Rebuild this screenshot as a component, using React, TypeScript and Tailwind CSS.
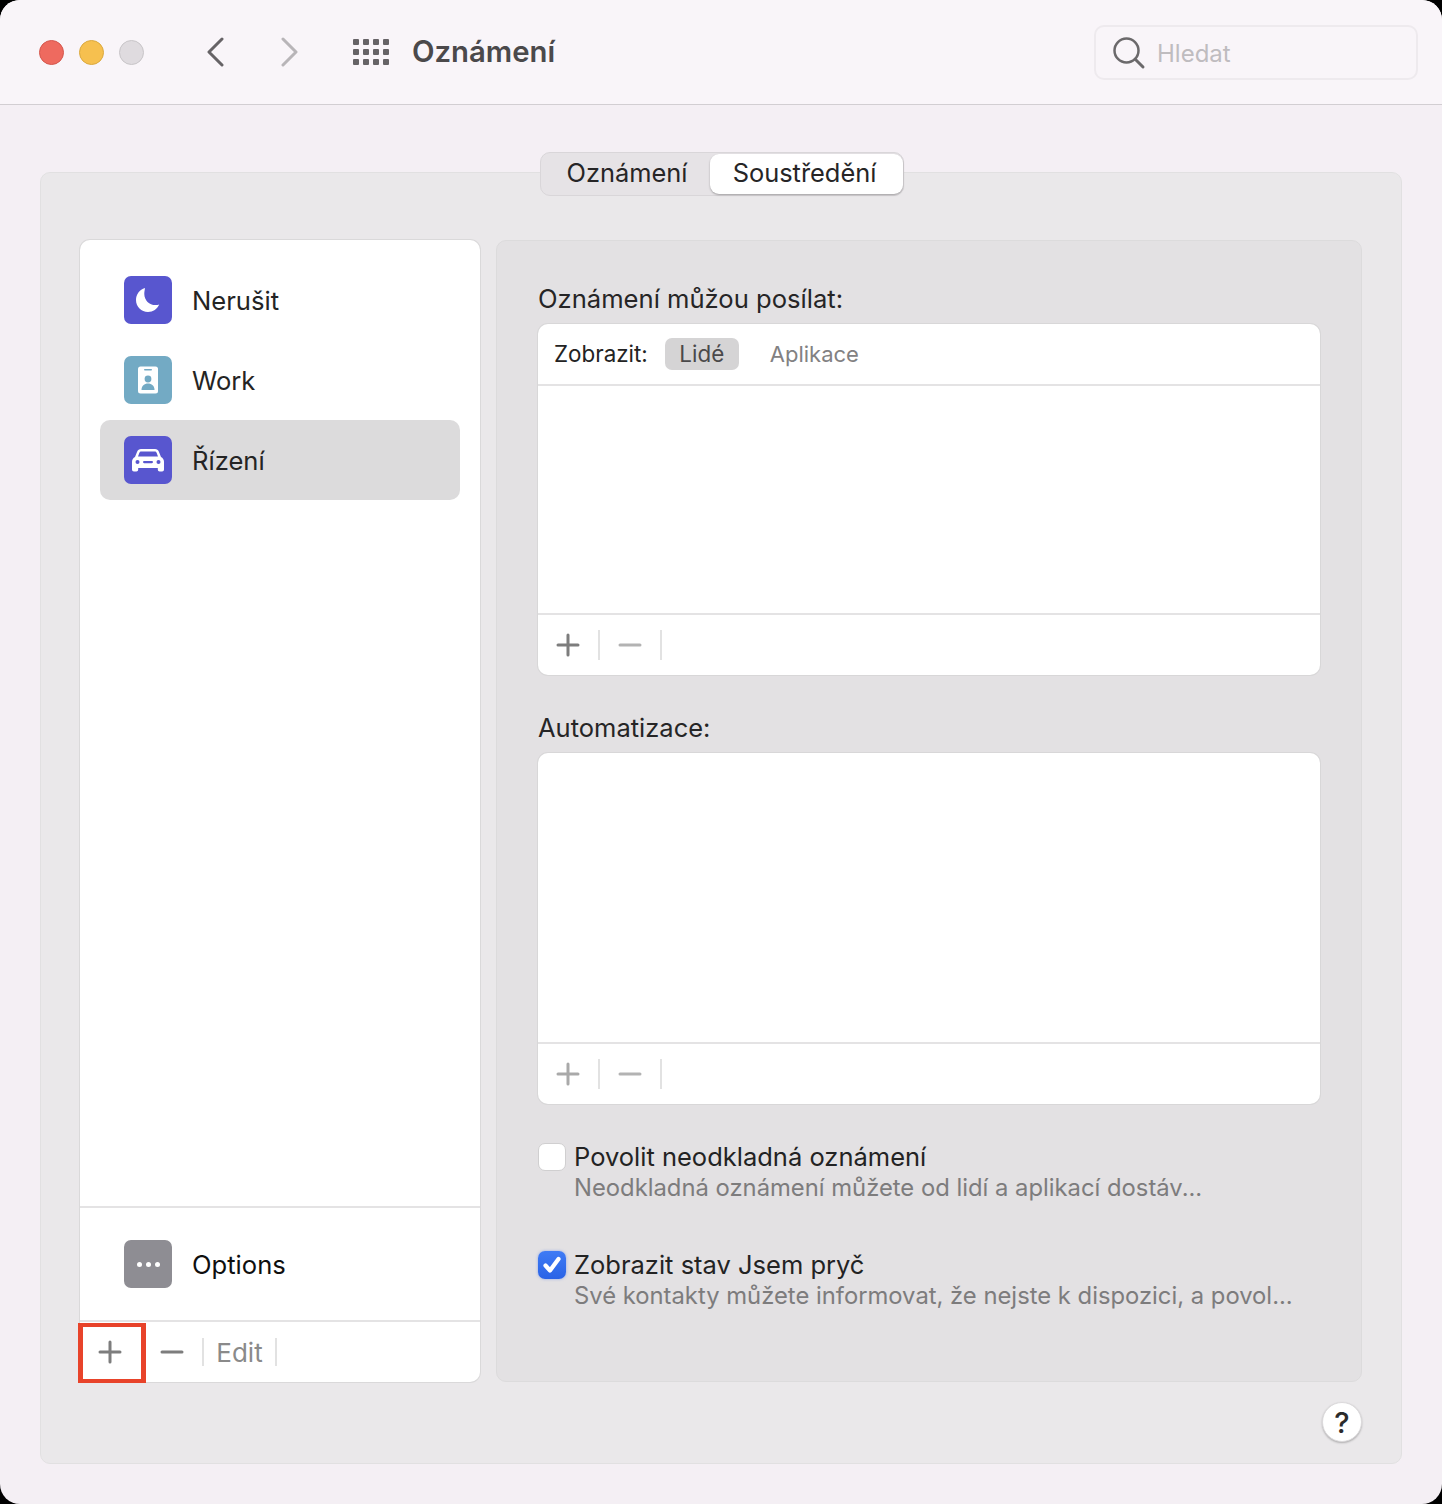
function Toolbar({ dim }: { dim?: boolean }) {
  return (
    <div className="h-[62px] flex items-center border-t-2 border-[#e4e3e4]">
      <div className="w-[62px] h-[30px] flex items-center justify-center border-r-2 border-[#e2e2e2]">
        <svg width="24" height="24" viewBox="0 0 24 24" className={dim ? 'text-[#a9a9a9]' : 'text-[#7d7d7d]'}>
          <path d="M12 2v20M2 12h20" stroke="currentColor" strokeWidth="3" strokeLinecap="round" />
        </svg>
      </div>
      <div className="w-[62px] h-[30px] flex items-center justify-center border-r-2 border-[#e2e2e2]">
        <svg width="24" height="24" viewBox="0 0 24 24" className="text-[#b3b3b3]">
          <path d="M2 12h20" stroke="currentColor" strokeWidth="3" strokeLinecap="round" />
        </svg>
      </div>
    </div>
  )
}

function IconTile({ color, children }: { color: string; children: React.ReactNode }) {
  return (
    <div className={`w-12 h-12 rounded-[7px] flex items-center justify-center shrink-0 ${color}`}>
      {children}
    </div>
  )
}

function SideRow({ label, selected, icon }: { label: string; selected?: boolean; icon: React.ReactNode }) {
  return (
    <div className={`h-20 flex items-center gap-5 pl-6 rounded-[10px] ${selected ? 'bg-[#dcdbdc]' : ''}`}>
      {icon}
      <span className="mt-[2px] text-[25.6px] text-[#242424]">{label}</span>
    </div>
  )
}

function CheckRow({ checked, title, sub }: { checked?: boolean; title: string; sub: string }) {
  return (
    <div className="flex gap-2">
      {checked ? (
        <div className="w-7 h-7 mt-[2px] rounded-[7px] bg-gradient-to-b from-[#3f7bf5] to-[#2a63e6] flex items-center justify-center shadow-[0_0_3px_rgba(60,110,240,0.5)]">
          <svg width="20" height="20" viewBox="0 0 20 20" fill="none">
            <path d="M3.500 10.500 8 15.500 16.500 4" stroke="white" strokeWidth="4.200" strokeLinecap="round" strokeLinejoin="round" />
          </svg>
        </div>
      ) : (
        <div className="w-7 h-7 mt-[2px] rounded-[7px] bg-white border border-[#d0cfd0]" />
      )}
      <div className="flex flex-col">
        <span className="text-[25.5px] leading-[31px] text-[#232323]">{title}</span>
        <span className="text-[23.8px] leading-[31px] text-[#7d7c7d] whitespace-nowrap">{sub}</span>
      </div>
    </div>
  )
}

export default function App() {
  return (
    <div className="w-[1442px] h-[1504px] bg-black font-['Inter',sans-serif] overflow-hidden">
      <div className="w-full h-full rounded-[20px] bg-[#f4eff4] flex flex-col overflow-hidden">
        {/* Title bar */}
        <header className="h-[105px] shrink-0 bg-[#f9f5f9] border-b border-[#d2ced2] flex items-center pl-[39px] pr-6">
          <div className="flex items-center gap-[15px]">
            <div className="w-[25px] h-[25px] rounded-full bg-[#ee6a5f] border border-[#d4574d]" />
            <div className="w-[25px] h-[25px] rounded-full bg-[#f6c04f] border border-[#dba93e]" />
            <div className="w-[25px] h-[25px] rounded-full bg-[#dfdbdf] border border-[#c8c5c8]" />
          </div>
          <svg width="20" height="30" viewBox="0 0 20 30" className="ml-[61px] text-[#666366]">
            <path d="M17 2 4 15l13 13" fill="none" stroke="currentColor" strokeWidth="3" strokeLinecap="round" strokeLinejoin="round" />
          </svg>
          <svg width="20" height="30" viewBox="0 0 20 30" className="ml-[55px] text-[#b8b5b8]">
            <path d="M3 2l13 13L3 28" fill="none" stroke="currentColor" strokeWidth="3" strokeLinecap="round" strokeLinejoin="round" />
          </svg>
          <div className="ml-[53px] grid grid-cols-4 gap-x-[4px] gap-y-[4px]">
            {Array.from({ length: 12 }).map((_, i) => (
              <div key={i} className="w-[6px] h-[6px] rounded-[1px] bg-[#666366]" />
            ))}
          </div>
          <h1 className="ml-[23px] text-[29.3px] font-semibold text-[#4b494b]">Oznámení</h1>
          <div className="ml-auto w-[324px] h-[55px] rounded-[10px] border-2 border-[#eeeaee] flex items-center pl-[16px] gap-[11px]">
            <svg width="34" height="34" viewBox="0 0 34 34" className="mt-[2px] text-[#6b696b]">
              <circle cx="14.5" cy="14.5" r="12" fill="none" stroke="currentColor" strokeWidth="2.5" />
              <path d="M23.5 23.5 31 31" stroke="currentColor" strokeWidth="3" strokeLinecap="round" />
            </svg>
            <span className="mt-[3px] text-[24px] text-[#bfbcbf]">Hledat</span>
          </div>
        </header>

        {/* Content */}
        <div className="flex-1 px-10 pt-[67px] pb-10">
          <div className="relative h-full rounded-[10px] bg-[#eae8ea] border border-[#e1e0e1] pt-[67px] px-[39px] flex flex-col">
            {/* Tabs sit over the panel edge */}
            <div className="absolute left-[499px] -top-[21px] w-[364px] h-[44px] rounded-[10px] bg-[#e6e3e6] border border-[#d9d6d9] flex pb-[2px]">
              <div className="w-[169px] pl-[3px] flex items-center justify-center text-[25.4px] text-[#262526]">Oznámení</div>
              <div className="w-[193px] pr-[4px] pb-[2px] rounded-[9px] bg-white shadow-[0_1px_2px_rgba(0,0,0,0.3)] flex items-center justify-center text-[25.4px] text-[#262526] mt-[1px] -mb-[1px]">
                Soustředění
              </div>
            </div>

            <div className="flex gap-4 h-[1142px]">
              {/* Sidebar */}
              <aside className="relative w-[400px] rounded-[10px] bg-white shadow-[0_0_0_1px_#dad9da] flex flex-col">
                <div className="flex-1 px-5 pt-5">
                  <SideRow
                    label="Nerušit"
                    icon={
                      <IconTile color="bg-[#5856cf]">
                        <svg width="26" height="26" viewBox="0 0 26 26" fill="white">
                          <path d="M10 1C4.500 2.600 1 7.500 1 13c0 6.600 5.400 12 12 12 5 0 9.400-3.100 11.200-7.500-1.100.4-2.400.6-3.700.6-6.300 0-11.200-5-11.200-11.200 0-1.900.3-3.500.7-5.900z" />
                        </svg>
                      </IconTile>
                    }
                  />
                  <SideRow
                    label="Work"
                    icon={
                      <IconTile color="bg-[#73aac4]">
                        <svg width="22" height="28" viewBox="0 0 22 28">
                          <rect x="1" y="0.5" width="20" height="27" rx="2.5" fill="white" />
                          <rect x="7" y="3" width="8" height="1.6" rx="0.8" fill="#73aac4" />
                          <circle cx="11" cy="13" r="3.4" fill="#73aac4" />
                          <path d="M4.500 24c0-4.200 2.900-6.500 6.500-6.500s6.500 2.300 6.500 6.500z" fill="#73aac4" />
                        </svg>
                      </IconTile>
                    }
                  />
                  <SideRow
                    label="Řízení"
                    selected
                    icon={
                      <IconTile color="bg-[#5856cf]">
                        <svg width="32" height="24" viewBox="0 0 32 24">
                          <path
                            fill="white"
                            d="M9 1h14c1.800 0 3.200 1 3.900 2.700L29 9c1.800 1 3 2.600 3 4.800V21.500c0 1.100-.8 2-1.900 2h-2.400c-1.100 0-1.900-.9-1.900-2V20H6.200v1.500c0 1.100-.8 2-1.900 2H1.900C.8 23.500 0 22.600 0 21.500v-7.700C0 11.600 1.200 10 3 9l2.100-5.300C5.800 2 7.200 1 9 1z"
                          />
                          <path fill="#5856cf" d="M9.200 3.500h13.600c.8 0 1.500.5 1.800 1.200L26 8.500H6l1.400-3.800c.3-.7 1-1.200 1.800-1.200z" />
                          <circle cx="5.500" cy="14" r="2" fill="#5856cf" />
                          <circle cx="26.500" cy="14" r="2" fill="#5856cf" />
                          <rect x="11" y="13" width="10" height="2.200" rx="1.100" fill="#5856cf" />
                        </svg>
                      </IconTile>
                    }
                  />
                </div>
                <div className="h-[114px] border-t-2 border-[#e4e3e4] flex items-center gap-5 pl-[44px]">
                  <IconTile color="bg-[#8e8d93]">
                    <div className="flex gap-[4px]">
                      <div className="w-[5px] h-[5px] rounded-full bg-white" />
                      <div className="w-[5px] h-[5px] rounded-full bg-white" />
                      <div className="w-[5px] h-[5px] rounded-full bg-white" />
                    </div>
                  </IconTile>
                  <span className="mt-[2px] text-[25.6px] text-[#0f0f0f]">Options</span>
                </div>
                <div className="h-[62px] border-t-2 border-[#e4e3e4] flex items-center">
                  <div className="w-[60px] flex justify-center">
                    <svg width="24" height="24" viewBox="0 0 24 24" className="text-[#7d7d7d]">
                      <path d="M12 2v20M2 12h20" stroke="currentColor" strokeWidth="3" strokeLinecap="round" />
                    </svg>
                  </div>
                  <div className="w-[64px] h-[28px] pl-[1px] flex items-center justify-center border-r-2 border-[#e2e2e2]">
                    <svg width="24" height="24" viewBox="0 0 24 24" className="text-[#7d7d7d]">
                      <path d="M2 12h20" stroke="currentColor" strokeWidth="3" strokeLinecap="round" />
                    </svg>
                  </div>
                  <div className="w-[73px] h-[28px] pt-[1px] flex items-center justify-center border-r-2 border-[#e2e2e2] text-[26px] text-[#8a8a8a]">
                    Edit
                  </div>
                </div>
                {/* Annotation around the add button */}
                <div className="absolute -left-[2px] -bottom-[1px] w-[68px] h-[60px] border-x-[5px] border-y-4 border-[#e8432a]" />
              </aside>

              {/* Detail panel */}
              <section className="flex-1 rounded-[10px] bg-[#e3e1e3] border border-[#dcdbdc] px-[41px] pt-[42px] flex flex-col">
                <p className="text-[25.6px] leading-[32px] text-[#262526] mb-[9px]">Oznámení můžou posílat:</p>
                <div className="h-[351px] rounded-[10px] bg-white shadow-[0_0_0_1px_#d8d7d8] flex flex-col">
                  <div className="h-[62px] flex items-center pl-[16px] border-b-2 border-[#e4e3e4] text-[22.4px]">
                    <span className="text-[#232323]">Zobrazit:</span>
                    <span className="ml-[17px] w-[74px] h-[32px] rounded-[7px] bg-[#d5d4d5] flex items-center justify-center text-[#4a494a]">Lidé</span>
                    <span className="ml-[31px] text-[22px] text-[#828182]">Aplikace</span>
                  </div>
                  <div className="flex-1" />
                  <Toolbar />
                </div>
                <p className="mt-[37px] text-[25.5px] leading-[32px] text-[#262526] mb-[9px]">Automatizace:</p>
                <div className="h-[351px] rounded-[10px] bg-white shadow-[0_0_0_1px_#d8d7d8] flex flex-col">
                  <div className="flex-1" />
                  <Toolbar dim />
                </div>
                <div className="mt-[37px]">
                  <CheckRow title="Povolit neodkladná oznámení" sub="Neodkladná oznámení můžete od lidí a aplikací dostáv..." />
                </div>
                <div className="mt-[46px]">
                  <CheckRow checked title="Zobrazit stav Jsem pryč" sub="Své kontakty můžete informovat, že nejste k dispozici, a povol..." />
                </div>
              </section>
            </div>

            <div className="flex justify-end mt-[20px]">
              <div className="w-10 h-10 pt-[1px] rounded-full bg-white border border-[#dcdadc] shadow-[0_1px_2px_rgba(0,0,0,0.25)] flex items-center justify-center text-[29px] font-medium text-[#2b2b2b]">
                ?
              </div>
            </div>
          </div>
        </div>
      </div>
    </div>
  )
}
